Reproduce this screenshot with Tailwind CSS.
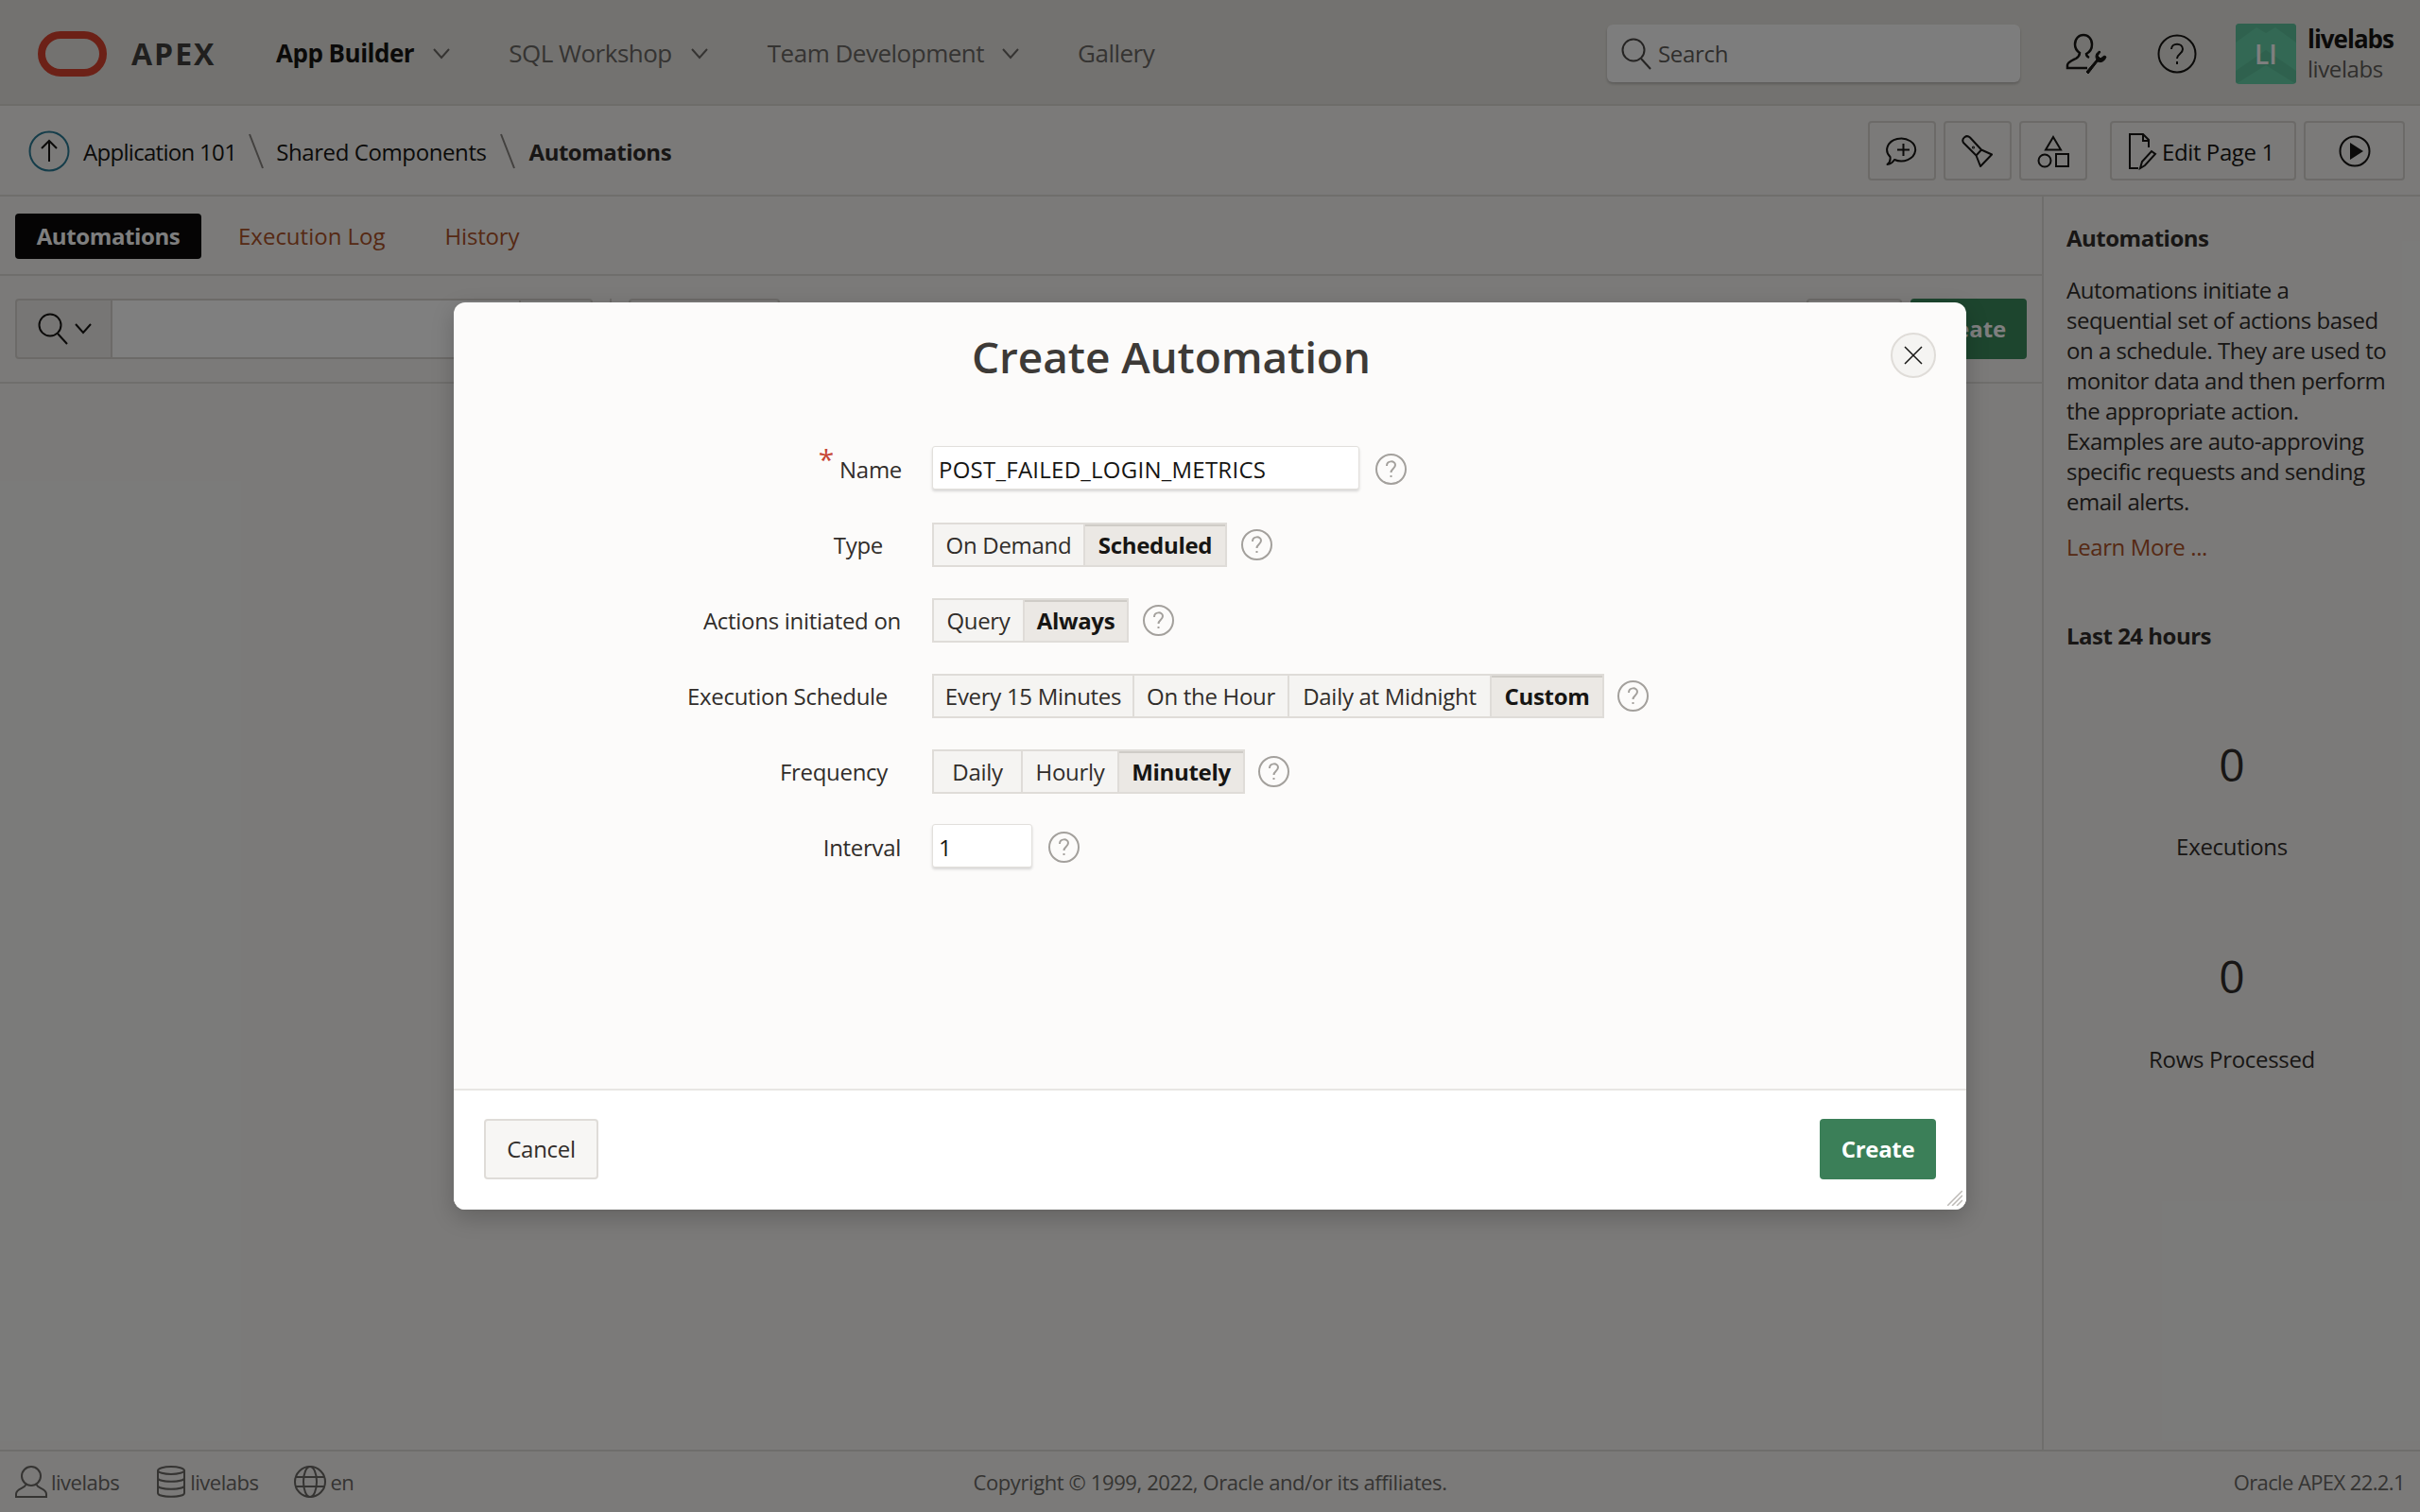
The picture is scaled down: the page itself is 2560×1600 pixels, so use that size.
<!DOCTYPE html>
<html lang="en"><head><meta charset="utf-8"><title>Create Automation</title>
<script src="https://cdn.jsdelivr.net/npm/@tailwindcss/browser@4"></script></head>
<body class="m-0 font-['Open_Sans','Noto_Sans',sans-serif] text-[24px] text-[#312d2a] overflow-hidden">
<div class="w-[2560px] h-[1600px] flex flex-col bg-[#f6f5f3] relative">
  <!-- Header -->
  <header class="h-[112px] shrink-0 flex items-center bg-[#e7e5e0] border-b-2 border-[#dbd8d3] pt-[3px] pl-[40px] pr-[28px]">
    <svg class="w-[73px] h-[48px] shrink-0" viewBox="0 0 73 48"><rect x="4" y="4" width="65" height="40" rx="20" fill="none" stroke="#d9432e" stroke-width="8"/></svg>
    <span class="ml-[26px] w-[153px] font-bold text-[32px] tracking-[2px] text-[#403e3c]">APEX</span>
    <span class="font-bold text-[26px] tracking-[-0.5px] text-[#161513]">App Builder</span>
    <svg class="ml-[20px] w-[18px] h-[12px]" viewBox="0 0 18 12" fill="none" stroke="#6b6865" stroke-width="2"><path d="M1 1l8 9 8-9"/></svg>
    <span class="ml-[62px] text-[#6b6865] text-[26px] tracking-[-0.5px]">SQL Workshop</span>
    <svg class="ml-[20px] w-[18px] h-[12px]" viewBox="0 0 18 12" fill="none" stroke="#6b6865" stroke-width="2"><path d="M1 1l8 9 8-9"/></svg>
    <span class="ml-[63px] text-[#6b6865] text-[26px] tracking-[-0.5px]">Team Development</span>
    <svg class="ml-[19px] w-[18px] h-[12px]" viewBox="0 0 18 12" fill="none" stroke="#6b6865" stroke-width="2"><path d="M1 1l8 9 8-9"/></svg>
    <span class="ml-[62px] text-[#6b6865] text-[26px] tracking-[-0.5px]">Gallery</span>
    <div class="ml-auto w-[437px] h-[61px] bg-[#fbfafa] rounded-[6px] shadow-[0_2px_3px_rgba(0,0,0,.2)] flex items-center pl-[14px] text-[#5f5c59]">
      <svg class="w-[34px] h-[34px]" viewBox="0 0 34 34" fill="none" stroke="#4b4846" stroke-width="2"><circle cx="14" cy="13" r="11.5"/><path d="M22 22l10 11"/></svg>
      <span class="ml-[6px] tracking-[-0.3px]">Search</span>
    </div>
    <svg class="ml-[48px] w-[44px] h-[44px]" viewBox="0 0 44 44" fill="none" stroke="#161513" stroke-width="2.500"><path d="M25 26c-2-1-3-2-3-4 4-2 6-6 6-10 0-6-4-10-9-10s-9 4-9 10c0 4 2 7 5 9 0 3-1 4-4 6-4 2-9 4-9 7v3h21"/><path d="M22 41l11-13c-2-3-1-7 3-9l1 1-3 4 3 3 4-3 2 1c-1 4-5 7-9 5L24 43z" fill="#161513" stroke="#161513" stroke-width="1"/></svg>
    <svg class="ml-[53px] w-[42px] h-[42px]" viewBox="0 0 42 42" fill="none" stroke="#161513" stroke-width="2"><circle cx="21" cy="21" r="19.500"/><path d="M15 16c0-7 12-7 12 0 0 5-6 5-6 10M21 29v3"/></svg>
    <div class="ml-[41px] w-[64px] h-[64px] rounded-[4px] overflow-hidden bg-[#67d0a8] relative flex items-center justify-center text-white text-[28px] font-semibold">
      <svg class="absolute inset-0 w-[64px] h-[64px]" viewBox="0 0 64 64"><path d="M0 20L22 4l10 6L42 4l22 16V0H0zM0 50l32-22 32 22v14L32 44 0 64z" fill="#5fc29c"/></svg>
      <span class="relative">LI</span>
    </div>
    <div class="ml-[12px] leading-[31px]"><div class="font-bold text-[#161513] text-[26px] tracking-[-1px]">livelabs</div><div class="text-[#5f5c59] tracking-[-0.4px]">livelabs</div></div>
  </header>
  <!-- Breadcrumb bar -->
  <div class="h-[96px] shrink-0 flex items-center border-b-2 border-[#dfdcd8] pt-[1px] pl-[30px] pr-[16px] text-[#161513]">
    <svg class="w-[44px] h-[44px]" viewBox="0 0 44 44" fill="none"><circle cx="22" cy="22" r="20.500" stroke="#2a7a94" stroke-width="2"/><path d="M22 33V11M14 19l8-8 8 8" stroke="#161513" stroke-width="2"/></svg>
    <span class="ml-[14px] tracking-[-0.7px] pt-[2px]">Application 101</span>
    <svg class="mx-[13px] w-[16px] h-[38px]" viewBox="0 0 16 38" stroke="#86827e" stroke-width="2"><path d="M1 1l14 36"/></svg>
    <span class="tracking-[-0.4px] pt-[2px]">Shared Components</span>
    <svg class="ml-[14px] mr-[15px] w-[16px] h-[38px]" viewBox="0 0 16 38" stroke="#86827e" stroke-width="2"><path d="M1 1l14 36"/></svg>
    <span class="font-bold text-[#312d2a] tracking-[-0.5px] pt-[2px]">Automations</span>
    <div class="ml-auto flex gap-[8px]">
      <div class="w-[72px] h-[63px] border-2 border-[#d8d5d0] rounded-[4px] flex items-center justify-center"><svg class="w-[36px] h-[36px]" viewBox="0 0 36 36" fill="none" stroke="#161513" stroke-width="2" stroke-linejoin="round"><path d="M2.500 32C5 30 6 27 5.500 24A15 12 0 1 1 10 27C8 30 6 32 2.500 32zM19.500 10v13M13 16.500h13"/></svg></div>
      <div class="w-[72px] h-[63px] border-2 border-[#d8d5d0] rounded-[4px] flex items-center justify-center"><svg class="w-[36px] h-[36px]" viewBox="0 0 36 36" fill="none" stroke="#161513" stroke-width="2" stroke-linejoin="round"><path d="M3 9a4.500 4.500 0 0 1 7-5.500L22 16.500l11 5L21 34l-4.500-11.500zM16.500 22.500l5.500-6"/><circle cx="13.500" cy="14" r=".5"/></svg></div>
      <div class="w-[72px] h-[63px] border-2 border-[#d8d5d0] rounded-[4px] flex items-center justify-center"><svg class="w-[36px] h-[36px]" viewBox="0 0 36 36" fill="none" stroke="#161513" stroke-width="2"><path d="M18 3l8 13.500H10z"/><circle cx="9" cy="28" r="6.500"/><rect x="21" y="21" width="13" height="13"/></svg></div>
      <div class="ml-[16px] w-[197px] h-[63px] border-2 border-[#d8d5d0] rounded-[4px] flex items-center pl-[17px]"><svg class="w-[32px] h-[40px]" viewBox="0 0 32 40" fill="none" stroke="#161513" stroke-width="2"><path d="M11 38H2V2h14l6 6v8M16 2v7h6"/><path d="M13 38l2-7 10-11 4 3-11 12z"/></svg><span class="ml-[4px] tracking-[-0.4px] pt-[2px]">Edit Page 1</span></div>
      <div class="w-[107px] h-[63px] border-2 border-[#d8d5d0] rounded-[4px] flex items-center justify-center"><svg class="w-[34px] h-[34px]" viewBox="0 0 34 34"><circle cx="17" cy="17" r="15.500" fill="none" stroke="#161513" stroke-width="2"/><path d="M12 8l14 9-14 9z" fill="#161513"/></svg></div>
    </div>
  </div>
  <!-- Body -->
  <div class="flex-1 flex min-h-0">
    <main class="flex-1 min-w-0 flex flex-col">
      <div class="h-[84px] shrink-0 flex items-center border-b-2 border-[#dfdcd8] pt-[2px] px-[16px]">
        <span class="h-[48px] w-[197px] flex items-center justify-center rounded-[4px] bg-[#0a0908] text-white font-bold tracking-[-0.4px]">Automations</span>
        <span class="ml-[39px] text-[#ac5228]">Execution Log</span>
        <span class="ml-[63px] text-[#ac5228] tracking-[-0.2px]">History</span>
      </div>
      <div class="h-[114px] shrink-0 flex items-center border-b-2 border-[#dfdcd8] px-[16px]">
        <div class="w-[103px] h-[64px] border-2 border-[#d8d5d0] bg-[#efedea] rounded-l-[4px] flex items-center justify-center gap-[6px]">
          <svg class="w-[34px] h-[34px]" viewBox="0 0 34 34" fill="none" stroke="#161513" stroke-width="2"><circle cx="14" cy="13" r="11.500"/><path d="M22 22l10 11"/></svg>
          <svg class="w-[18px] h-[12px]" viewBox="0 0 18 12" fill="none" stroke="#161513" stroke-width="2"><path d="M1 1l8 9 8-9"/></svg>
        </div>
        <div class="w-[430px] h-[64px] border-y-2 border-[#d8d5d0] bg-white"></div>
        <div class="w-[78px] h-[64px] border-2 border-[#d8d5d0] rounded-r-[4px] bg-[#f5f4f2]"></div>
        <div class="ml-[18px] pl-[18px] border-l-2 border-[#d8d5d0] h-[64px]"><div class="w-[160px] h-[64px] border-2 border-[#d8d5d0] rounded-[4px]"></div></div>
        <div class="ml-auto w-[101px] h-[64px] border-2 border-[#d8d5d0] rounded-[4px]"></div>
        <div class="ml-[9px] w-[123px] h-[64px] rounded-[4px] bg-[#3a8a5c] text-white font-bold flex items-center justify-center">Create</div>
      </div>
      <div class="flex-1"></div>
    </main>
    <aside class="w-[400px] shrink-0 border-l-2 border-[#dfdcd8] pl-[24px] pr-[28px] pt-[28px] text-[#312d2a]">
      <h3 class="font-bold leading-[32px] tracking-[-0.5px]">Automations</h3>
      <p class="mt-[23px] leading-[32px] tracking-[-0.5px]">Automations initiate a sequential set of actions based on a schedule. They are used to monitor data and then perform the appropriate action. Examples are auto-approving specific requests and sending email alerts.</p>
      <p class="mt-[16px] leading-[32px] tracking-[-0.4px] text-[#ac5228]">Learn More ...</p>
      <h3 class="mt-[62px] font-bold leading-[32px] tracking-[-0.5px]">Last 24 hours</h3>
      <div class="w-[350px] text-center">
        <div class="mt-[88px] text-[48px] leading-[64px]">0</div>
        <div class="mt-[39px] leading-[32px] tracking-[-0.3px]">Executions</div>
        <div class="pt-[89px] text-[48px] leading-[64px]">0</div>
        <div class="mt-[40px] leading-[32px] tracking-[-0.3px]">Rows Processed</div>
      </div>
    </aside>
  </div>
  <!-- Footer -->
  <footer class="h-[66px] shrink-0 border-t-2 border-[#dfdcd8] flex items-center px-[16px] text-[22px] tracking-[-0.5px] text-[#6b6865] relative">
    <svg class="w-[34px] h-[34px]" viewBox="0 0 34 34" fill="none" stroke="#6b6865" stroke-width="2"><circle cx="17" cy="11" r="10"/><path d="M11 20c0 4-10 4-10 10v3h32v-3c0-6-10-6-10-10"/></svg>
    <span class="ml-[4px]">livelabs</span>
    <svg class="ml-[40px] w-[30px] h-[34px]" viewBox="0 0 30 34" fill="none" stroke="#6b6865" stroke-width="2"><ellipse cx="15" cy="5" rx="14" ry="4"/><path d="M1 5v24c0 5 28 5 28 0V5M1 13c0 5 28 5 28 0M1 21c0 5 28 5 28 0"/></svg>
    <span class="ml-[5px]">livelabs</span>
    <svg class="ml-[38px] w-[34px] h-[34px]" viewBox="0 0 34 34" fill="none" stroke="#6b6865" stroke-width="2"><circle cx="17" cy="17" r="16"/><ellipse cx="17" cy="17" rx="7" ry="16"/><path d="M2 12h30M2 22h30"/></svg>
    <span class="ml-[4px]">en</span>
    <span class="absolute left-0 right-0 text-center tracking-[-0.4px]">Copyright © 1999, 2022, Oracle and/or its affiliates.</span>
    <span class="ml-auto tracking-[-0.6px]">Oracle APEX 22.2.1</span>
  </footer>

  <!-- Overlay -->
  <div class="absolute inset-0 bg-black/50 flex items-center justify-center">
    <div class="w-[1600px] h-[960px] bg-[#fcfbfa] rounded-[12px] flex flex-col overflow-hidden shadow-[0_8px_24px_rgba(0,0,0,.2)] relative">
      <div class="h-[137px] shrink-0 flex items-center pr-[82px] relative">
        <h1 class="w-full text-center font-semibold text-[46px] leading-[58px] tracking-[-0.1px] text-[#3d3a37] -mt-[24px]">Create Automation</h1>
        <button class="absolute right-[32px] top-[32px] w-[48px] h-[48px] rounded-full bg-[#f5f4f2] border-2 border-[#dfdcd8] flex items-center justify-center"><svg class="w-[20px] h-[20px]" viewBox="0 0 20 20" stroke="#161513" stroke-width="1.500"><path d="M1 1l18 18M19 1L1 19"/></svg></button>
      </div>
      <div class="flex-1 min-h-0 text-[#312d2a] tracking-[-0.3px]">
        <div class="h-[80px] flex items-center">
          <label class="w-[474px] text-right"><span class="text-[#c74634] text-[30px] leading-[0] relative -top-[9px] mr-[6px]">*</span>Name</label>
          <div class="ml-[32px] mb-[4px] w-[452px] h-[46px] bg-white border border-[#e2e0dc] rounded-[3px] shadow-[0_2px_3px_rgba(0,0,0,.15)] flex items-center pt-[4px] pl-[6px] text-[#161513] tracking-[0.25px]">POST_FAILED_LOGIN_METRICS</div>
          <svg class="ml-[17px] mb-[1px] w-[33px] h-[33px]" viewBox="0 0 33 33" fill="none" stroke="#a3a09c" stroke-width="2"><circle cx="16.500" cy="16.500" r="15.500"/><path d="M12 13c0-6 9-6 9-1 0 4-4.500 4-4.500 8M16.500 23v2"/></svg>
        </div>
        <div class="h-[80px] flex items-center">
          <label class="w-[454px] text-right">Type</label>
          <div class="ml-[52px] mb-[2px] flex h-[47px] border-2 border-[#dfdcd8] bg-[#f5f4f2]">
            <span class="w-[158px] flex items-center justify-center pt-[2px]">On Demand</span>
            <span class="w-[150px] flex items-center justify-center pt-[2px] bg-[#ebe8e4] border-l-2 border-[#dfdcd8] shadow-[inset_0_2px_0_#cfccc7] font-bold text-[#161513]">Scheduled</span>
          </div>
          <svg class="ml-[15px] mb-[1px] w-[33px] h-[33px]" viewBox="0 0 33 33" fill="none" stroke="#a3a09c" stroke-width="2"><circle cx="16.500" cy="16.500" r="15.500"/><path d="M12 13c0-6 9-6 9-1 0 4-4.500 4-4.500 8M16.500 23v2"/></svg>
        </div>
        <div class="h-[80px] flex items-center">
          <label class="w-[473px] text-right">Actions initiated on</label>
          <div class="ml-[33px] mb-[2px] flex h-[47px] border-2 border-[#dfdcd8] bg-[#f5f4f2]">
            <span class="w-[94px] flex items-center justify-center pt-[2px]">Query</span>
            <span class="w-[110px] flex items-center justify-center pt-[2px] bg-[#ebe8e4] border-l-2 border-[#dfdcd8] shadow-[inset_0_2px_0_#cfccc7] font-bold text-[#161513]">Always</span>
          </div>
          <svg class="ml-[15px] mb-[1px] w-[33px] h-[33px]" viewBox="0 0 33 33" fill="none" stroke="#a3a09c" stroke-width="2"><circle cx="16.500" cy="16.500" r="15.500"/><path d="M12 13c0-6 9-6 9-1 0 4-4.500 4-4.500 8M16.500 23v2"/></svg>
        </div>
        <div class="h-[80px] flex items-center">
          <label class="w-[459px] text-right">Execution Schedule</label>
          <div class="ml-[47px] mb-[2px] flex h-[47px] border-2 border-[#dfdcd8] bg-[#f5f4f2]">
            <span class="w-[210px] flex items-center justify-center pt-[2px]">Every 15 Minutes</span>
            <span class="w-[164px] flex items-center justify-center pt-[2px] border-l-2 border-[#dfdcd8]">On the Hour</span>
            <span class="w-[214px] flex items-center justify-center pt-[2px] border-l-2 border-[#dfdcd8]">Daily at Midnight</span>
            <span class="w-[119px] flex items-center justify-center pt-[2px] bg-[#ebe8e4] border-l-2 border-[#dfdcd8] shadow-[inset_0_2px_0_#cfccc7] font-bold text-[#161513]">Custom</span>
          </div>
          <svg class="ml-[14px] mb-[1px] w-[33px] h-[33px]" viewBox="0 0 33 33" fill="none" stroke="#a3a09c" stroke-width="2"><circle cx="16.500" cy="16.500" r="15.500"/><path d="M12 13c0-6 9-6 9-1 0 4-4.500 4-4.500 8M16.500 23v2"/></svg>
        </div>
        <div class="h-[80px] flex items-center">
          <label class="w-[459px] text-right">Frequency</label>
          <div class="ml-[47px] mb-[2px] flex h-[47px] border-2 border-[#dfdcd8] bg-[#f5f4f2]">
            <span class="w-[92px] flex items-center justify-center pt-[2px]">Daily</span>
            <span class="w-[102px] flex items-center justify-center pt-[2px] border-l-2 border-[#dfdcd8]">Hourly</span>
            <span class="w-[133px] flex items-center justify-center pt-[2px] bg-[#ebe8e4] border-l-2 border-[#dfdcd8] shadow-[inset_0_2px_0_#cfccc7] font-bold text-[#161513]">Minutely</span>
          </div>
          <svg class="ml-[14px] mb-[1px] w-[33px] h-[33px]" viewBox="0 0 33 33" fill="none" stroke="#a3a09c" stroke-width="2"><circle cx="16.500" cy="16.500" r="15.500"/><path d="M12 13c0-6 9-6 9-1 0 4-4.500 4-4.500 8M16.500 23v2"/></svg>
        </div>
        <div class="h-[80px] flex items-center">
          <label class="w-[473px] text-right">Interval</label>
          <div class="ml-[33px] mb-[4px] w-[106px] h-[46px] bg-white border border-[#e2e0dc] rounded-[3px] shadow-[0_2px_3px_rgba(0,0,0,.15)] flex items-center pt-[4px] pl-[6px] text-[#161513]">1</div>
          <svg class="ml-[17px] mb-[1px] w-[33px] h-[33px]" viewBox="0 0 33 33" fill="none" stroke="#a3a09c" stroke-width="2"><circle cx="16.500" cy="16.500" r="15.500"/><path d="M12 13c0-6 9-6 9-1 0 4-4.500 4-4.500 8M16.500 23v2"/></svg>
        </div>
      </div>
      <div class="h-[128px] shrink-0 bg-white border-t-2 border-[#e8e6e3] flex items-center justify-between pb-[2px] px-[32px]">
        <button class="w-[121px] h-[64px] bg-[#f7f6f4] border-2 border-[#dfdcd8] rounded-[4px] tracking-[-0.3px]">Cancel</button>
        <button class="w-[123px] h-[64px] bg-[#3b7f58] text-white font-bold rounded-[4px] tracking-[-0.3px]">Create</button>
      </div>
      <svg class="absolute right-[4px] bottom-[4px] w-[16px] h-[16px]" viewBox="0 0 16 16" stroke="#bdbab6" stroke-width="1.500"><path d="M0 16L16 0M5 16L16 5M10 16l6-6"/></svg>
    </div>
  </div>
</div>
</body></html>
